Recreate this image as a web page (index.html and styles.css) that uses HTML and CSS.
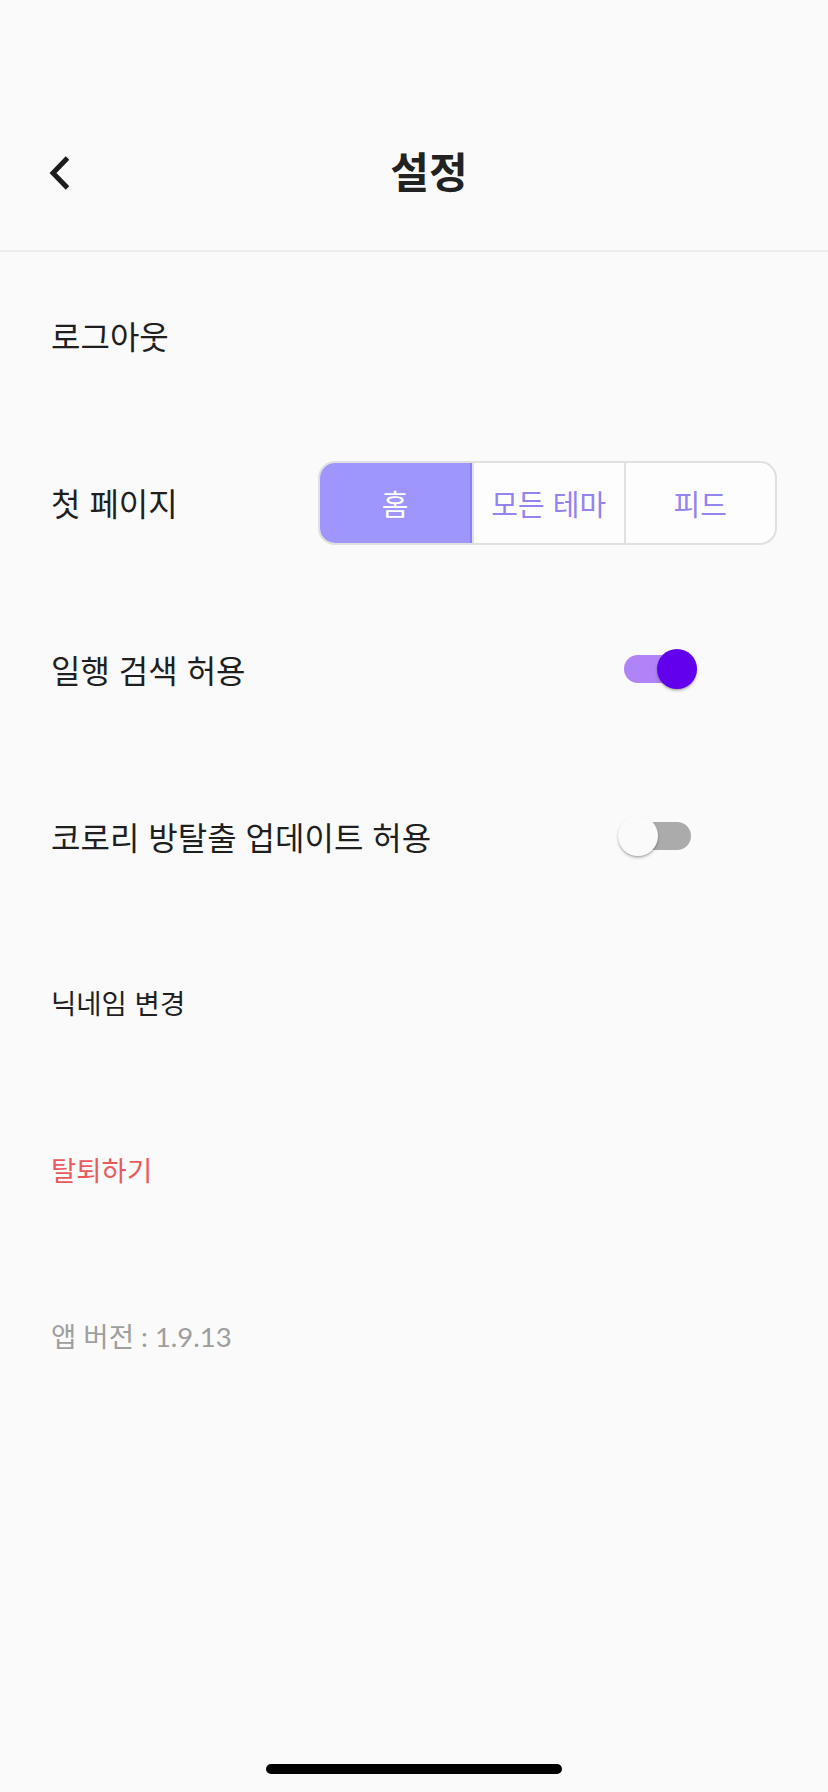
FILE: index.html
```html
<!DOCTYPE html>
<html lang="ko">
<head>
<meta charset="utf-8">
<title>설정</title>
<link rel="stylesheet" href="styles.css">
</head>
<body>
<div class="screen">
  <header class="header">
    <div class="bar">
      <div class="back">
        <svg width="24" height="36" viewBox="0 0 24 36"><path d="M19.5 3 L5 18 L19.5 33" fill="none" stroke="#1c1c1c" stroke-width="5"/></svg>
      </div>
      <h1 class="title">설정</h1>
      <div class="spacer"></div>
    </div>
  </header>
  <main class="list">
    <div class="row"><span class="label">로그아웃</span></div>
    <div class="row">
      <span class="label">첫 페이지</span>
      <div class="seg">
        <div class="seg-item active">홈</div>
        <div class="seg-item">모든 테마</div>
        <div class="seg-item">피드</div>
      </div>
    </div>
    <div class="row">
      <span class="label">일행 검색 허용</span>
      <div class="switch on"><div class="track"></div><div class="thumb"></div></div>
    </div>
    <div class="row">
      <span class="label">코로리 방탈출 업데이트 허용</span>
      <div class="switch"><div class="track"></div><div class="thumb"></div></div>
    </div>
    <div class="row"><span class="label small">닉네임 변경</span></div>
    <div class="row"><span class="label small danger">탈퇴하기</span></div>
    <div class="row"><span class="label small muted version">앱 버전 : 1.9.13</span></div>
  </main>
  <div class="home-indicator"></div>
</div>
</body>
</html>
```
FILE: styles.css
```css
html, body {
  margin: 0;
  padding: 0;
  background: #fafafa;
}
body {
  font-family: "Noto Sans CJK KR", "Noto Sans", sans-serif;
  color: #1f1f1f;
}
.screen {
  width: 828px;
  height: 1792px;
  display: flex;
  flex-direction: column;
  position: relative;
  overflow: hidden;
}
.header {
  padding-top: 92px;
  border-bottom: 2px solid #ececec;
}
.bar {
  height: 158px;
  display: flex;
  align-items: center;
}
.back {
  width: 120px;
  padding-left: 48px;
  box-sizing: border-box;
  display: flex;
  align-items: center;
  margin-top: 3px;
}
.title {
  flex: 1;
  text-align: center;
  margin: 0;
  font-size: 42px;
  font-weight: 700;
  color: #222;
  line-height: 1;
  margin-top: -3px;
}
.spacer {
  width: 90px;
}
.list {
  display: flex;
  flex-direction: column;
}
.row {
  height: 167px;
  display: flex;
  align-items: center;
  justify-content: space-between;
  padding: 0 51px 0 51px;
  margin-top: -1px;
  margin-bottom: 1px;
}
.label {
  font-size: 32px;
  line-height: 1;
}
.label.small {
  font-size: 27.5px;
}
.danger {
  color: #ea5a5c;
}
.muted {
  color: #9e9e9e;
}
.version {
  font-family: "Lato", "Noto Sans CJK KR", sans-serif;
}
.seg {
  display: flex;
  width: 459px;
  height: 84px;
  border: 2px solid #e0e0e0;
  border-radius: 17px;
  overflow: hidden;
  background: #fdfdfd;
  box-sizing: border-box;
  margin-top: 2px;
}
.seg-item {
  flex: 1;
  display: flex;
  align-items: center;
  justify-content: center;
  font-size: 29px;
  color: #9384ef;
  border-left: 2px solid #e0e0e0;
}
.seg-item:first-child {
  border-left: none;
}
.seg-item.active {
  background: #9e96fd;
  color: #ffffff;
  box-shadow: inset 0 0 0 2px #8b7ff5;
  margin: -2px 0 -2px -2px;
  flex: 0 0 154px;
}
.switch {
  position: relative;
  width: 80px;
  height: 40px;
  margin-right: 79px;
}
.track {
  position: absolute;
  left: 6px;
  top: 6px;
  width: 67px;
  height: 28px;
  border-radius: 14px;
  background: #ababab;
}
.thumb {
  position: absolute;
  left: 0;
  top: 0;
  width: 40px;
  height: 40px;
  border-radius: 50%;
  background: #fafafa;
  box-shadow: 0 2px 3px rgba(0,0,0,0.22), 0 1px 1px rgba(0,0,0,0.12);
}
.switch.on .track {
  background: #b083f6;
}
.switch.on .thumb {
  left: 39px;
  background: #6200ee;
}
.home-indicator {
  position: absolute;
  left: 266px;
  bottom: 18px;
  width: 296px;
  height: 10px;
  border-radius: 5px;
  background: #000;
}
```
